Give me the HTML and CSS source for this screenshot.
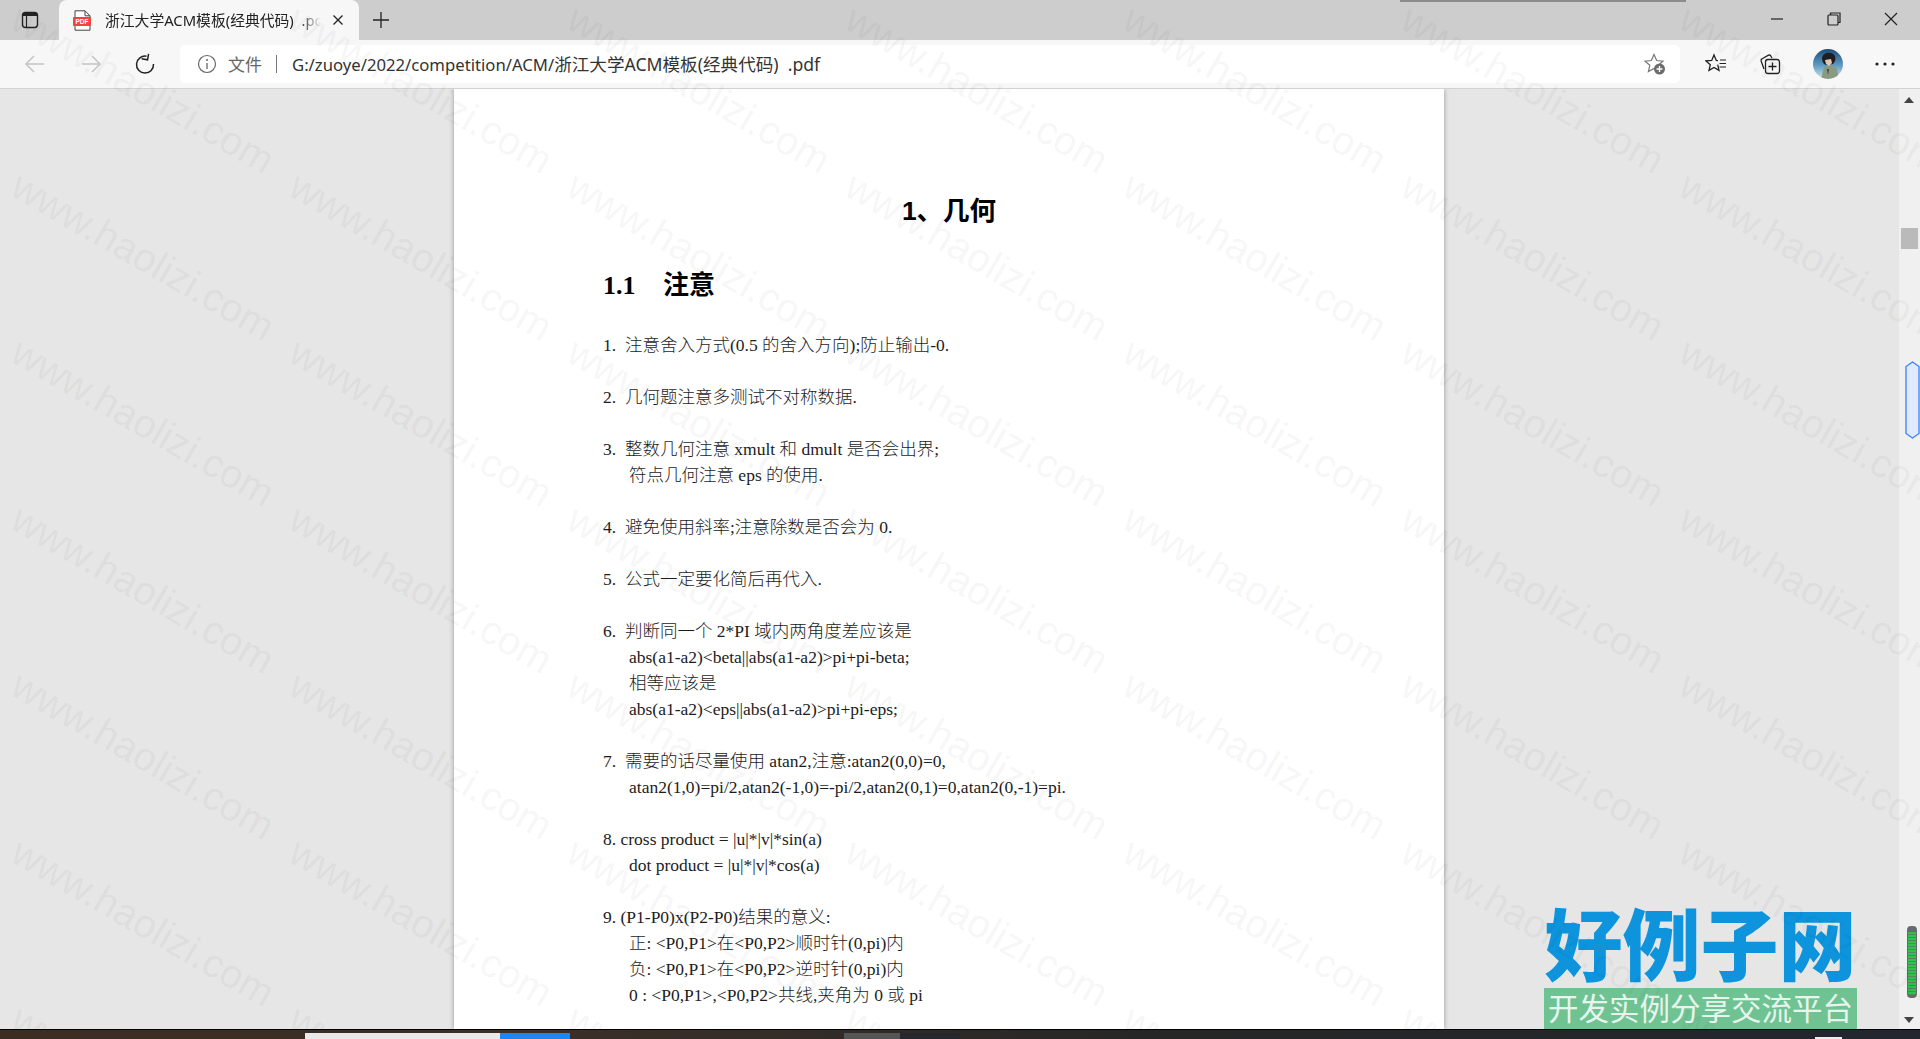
FILE: index.html
```html
<!DOCTYPE html>
<html lang="zh">
<head>
    <meta charset="UTF-8">
    <title>浙江大学ACM模板(经典代码) .pdf</title>
    <link rel="stylesheet" href="styles.css">
</head>
<body>
<div class="tabbar">
    <svg class="tab_actions" width="18" height="18" viewBox="0 0 18 18"><rect x="1.5" y="1.5" width="15" height="15" rx="3" fill="none" stroke="#222" stroke-width="1.4"/><path d="M2 2h14v3H2z" fill="#222"/><path d="M5.5 5v11" stroke="#222" stroke-width="1.2"/></svg>
    <div class="tab">
        <svg class="tab_icon" width="20" height="21" viewBox="0 0 20 21"><path d="M3 .8h10l5 5v14.400H3z" fill="#fff" stroke="#444" stroke-width="1"/><path d="M13 .8v5h5" fill="none" stroke="#444"/><rect x="1" y="7" width="18" height="9" rx="1" fill="#ee4444"/><text x="10" y="14.300" text-anchor="middle" class="pdf_txt">PDF</text></svg>
        <span class="tab_title">浙江大学ACM模板(经典代码)&nbsp; .pdf</span>
        <svg class="tab_close" width="12" height="12" viewBox="0 0 12 12"><path d="M1.500 1.500l9 9M10.500 1.500l-9 9" stroke="#222" stroke-width="1.300"/></svg>
    </div>
    <svg class="tab_new" width="18" height="18" viewBox="0 0 18 18"><path d="M9 1v16M1 9h16" stroke="#222" stroke-width="1.300"/></svg>
    <div class="tab_shadow"></div>
    <div class="win_btns">
        <svg width="14" height="14" viewBox="0 0 14 14"><path d="M1 7h12" stroke="#222" stroke-width="1.200"/></svg>
        <svg width="14" height="14" viewBox="0 0 14 14"><rect x="1" y="3" width="10" height="10" rx="1" fill="none" stroke="#222" stroke-width="1.200"/><path d="M3.500 3V1H13v9.500h-2" fill="none" stroke="#222" stroke-width="1.200"/></svg>
        <svg width="14" height="14" viewBox="0 0 14 14"><path d="M1 1l12 12M13 1L1 13" stroke="#222" stroke-width="1.200"/></svg>
    </div>
</div>
<div class="toolbar">
    <svg class="nav_btn back" width="22" height="22" viewBox="0 0 22 22"><path d="M20 11H2M10 3l-8 8 8 8" fill="none" stroke="#c4c4c4" stroke-width="1.500"/></svg>
    <svg class="nav_btn forward" width="22" height="22" viewBox="0 0 22 22"><path d="M2 11h18M12 3l8 8-8 8" fill="none" stroke="#c4c4c4" stroke-width="1.500"/></svg>
    <svg class="nav_btn reload" width="22" height="22" viewBox="0 0 22 22"><path d="M12.500 3.200A8.500 8.500 0 1 0 19.500 11" fill="none" stroke="#222" stroke-width="1.500"/><path d="M14 .5v6H8" fill="none" stroke="#222" stroke-width="1.500" transform="rotate(10 12 4)"/></svg>
    <div class="address">
        <svg class="info_icon" width="20" height="20" viewBox="0 0 20 20"><circle cx="10" cy="10" r="8.500" fill="none" stroke="#666" stroke-width="1.200"/><path d="M10 9v6" stroke="#666" stroke-width="1.300"/><circle cx="10" cy="6" r="1" fill="#666"/></svg>
        <span class="scheme">文件</span>
        <span class="sep"></span>
        <span class="url"><span class="url_path">G:/zuoye/2022/competition/ACM/</span>浙江大学ACM模板(经典代码)&nbsp; .pdf</span>
        <svg class="fav_add" width="24" height="24" viewBox="0 0 24 24"><path d="M11 2.500l2.700 6 6.300.6-4.800 4.200 1.400 6.300L11 16.400l-5.600 3.200 1.400-6.300L2 9.100l6.300-.6z" fill="none" stroke="#777" stroke-width="1.200"/><circle cx="16.500" cy="17" r="5.500" fill="#6b6b6b"/><path d="M16.500 14v6M13.500 17h6" stroke="#fff" stroke-width="1.400"/></svg>
    </div>
    <svg class="tool_btn favs" width="22" height="22" viewBox="0 0 22 22"><path d="M13 7.600L11.300 7.400 9 2 6.700 7.400 1 7.900 5.300 11.700 4 17.400 9 14.400 14 17.400 12.700 11.700" fill="none" stroke="#222" stroke-width="1.300"/><path d="M15 7h6M14.500 10.500h6.500M14.500 14h6.500" stroke="#222" stroke-width="1.200"/></svg>
    <svg class="tool_btn colls" width="22" height="22" viewBox="0 0 22 22"><path d="M5 16L2.200 8.200a2 2 0 0 1 1-2.500L9.500 2.200a2 2 0 0 1 2.500 1L13 5" fill="none" stroke="#222" stroke-width="1.300"/><rect x="6.500" y="6.500" width="14" height="14" rx="2.500" fill="none" stroke="#222" stroke-width="1.300"/><path d="M13.500 9.500v8M9.500 13.500h8" stroke="#222" stroke-width="1.300"/></svg>
    <svg class="avatar" width="30" height="30" viewBox="0 0 30 30">
        <defs>
            <clipPath id="av_clip"><circle cx="15" cy="15" r="15"/></clipPath>
            <linearGradient id="av_sky" x1="0" y1="0" x2="0" y2="1"><stop offset="0" stop-color="#1c4a7a"/><stop offset=".55" stop-color="#5f9cc4"/><stop offset="1" stop-color="#d5e6ea"/></linearGradient>
        </defs>
        <g clip-path="url(#av_clip)">
            <rect width="30" height="30" fill="url(#av_sky)"/>
            <path d="M8 30l3-12 8-2 5 4 2 10z" fill="#8a9a82"/>
            <path d="M9 9c1-6 10-7 13-2 1 3 0 6-2 8l-7 1c-3-1-4-4-4-7z" fill="#1c1e22"/>
            <path d="M12 11l6-1 1 4-3 3-3-2z" fill="#e2c8b0"/>
            <path d="M14 20l1 6 1-6z" fill="#3a4232"/>
        </g>
    </svg>
    <svg class="tool_btn more" width="22" height="6" viewBox="0 0 22 6"><circle cx="3" cy="3" r="1.600" fill="#222"/><circle cx="11" cy="3" r="1.600" fill="#222"/><circle cx="19" cy="3" r="1.600" fill="#222"/></svg>
</div>
<div class="main">
    <div class="viewer">
        <div class="page">
            <h1 class="title">1、几何</h1>
            <h2 class="sub"><span class="sub_no">1.1</span>注意</h2>
            <p><span class="no">1.</span>注意舍入方式(0.5 的舍入方向);防止输出-0.</p>
            <p><span class="no">2.</span>几何题注意多测试不对称数据.</p>
            <p><span class="no">3.</span>整数几何注意 xmult 和 dmult 是否会出界;<br><span class="indent">符点几何注意 eps 的使用.</span></p>
            <p><span class="no">4.</span>避免使用斜率;注意除数是否会为 0.</p>
            <p><span class="no">5.</span>公式一定要化简后再代入.</p>
            <p><span class="no">6.</span>判断同一个 2*PI 域内两角度差应该是<br><span class="indent">abs(a1-a2)&lt;beta||abs(a1-a2)&gt;pi+pi-beta;</span><br><span class="indent">相等应该是</span><br><span class="indent">abs(a1-a2)&lt;eps||abs(a1-a2)&gt;pi+pi-eps;</span></p>
            <p><span class="no">7.</span>需要的话尽量使用 atan2,注意:atan2(0,0)=0,<br><span class="indent">atan2(1,0)=pi/2,atan2(-1,0)=-pi/2,atan2(0,1)=0,atan2(0,-1)=pi.</span></p>
            <p>8. cross product = |u|*|v|*sin(a)<br><span class="indent">dot product = |u|*|v|*cos(a)</span></p>
            <p>9. (P1-P0)x(P2-P0)结果的意义:<br><span class="indent">正: &lt;P0,P1&gt;在&lt;P0,P2&gt;顺时针(0,pi)内</span><br><span class="indent">负: &lt;P0,P1&gt;在&lt;P0,P2&gt;逆时针(0,pi)内</span><br><span class="indent">0 : &lt;P0,P1&gt;,&lt;P0,P2&gt;共线,夹角为 0 或 pi</span></p>
        </div>
    </div>
    <div class="scroll">
        <span class="arrow_up"></span>
        <span class="thumb"></span>
        <svg class="marker" width="15" height="78" viewBox="0 0 15 78"><path d="M7.500 1L14 5.500v67L7.500 77 1 72.500v-67z" fill="#e0eafc" stroke="#3b82f6" stroke-width="1.300"/></svg>
        <span class="meter"></span>
        <span class="arrow_down"></span>
    </div>
</div>
<div class="taskbar">
    <span class="task_white"></span>
    <span class="task_blue"></span>
    <span class="task_gray"></span>
    <span class="task_dark"></span>
    <span class="task_tray"></span>
</div>
<div class="logo">
    <div class="logo_name">好例子网</div>
    <div class="logo_band">开发实例分享交流平台</div>
</div>
<div class="marks">
    <span>www.haolizi.com</span><span>www.haolizi.com</span><span>www.haolizi.com</span><span>www.haolizi.com</span><span>www.haolizi.com</span><span>www.haolizi.com</span><span>www.haolizi.com</span>
    <span>www.haolizi.com</span><span>www.haolizi.com</span><span>www.haolizi.com</span><span>www.haolizi.com</span><span>www.haolizi.com</span><span>www.haolizi.com</span><span>www.haolizi.com</span>
    <span>www.haolizi.com</span><span>www.haolizi.com</span><span>www.haolizi.com</span><span>www.haolizi.com</span><span>www.haolizi.com</span><span>www.haolizi.com</span><span>www.haolizi.com</span>
    <span>www.haolizi.com</span><span>www.haolizi.com</span><span>www.haolizi.com</span><span>www.haolizi.com</span><span>www.haolizi.com</span><span>www.haolizi.com</span><span>www.haolizi.com</span>
    <span>www.haolizi.com</span><span>www.haolizi.com</span><span>www.haolizi.com</span><span>www.haolizi.com</span><span>www.haolizi.com</span><span>www.haolizi.com</span><span>www.haolizi.com</span>
    <span>www.haolizi.com</span><span>www.haolizi.com</span><span>www.haolizi.com</span><span>www.haolizi.com</span><span>www.haolizi.com</span><span>www.haolizi.com</span><span>www.haolizi.com</span>
    <span>www.haolizi.com</span><span>www.haolizi.com</span><span>www.haolizi.com</span><span>www.haolizi.com</span><span>www.haolizi.com</span><span>www.haolizi.com</span><span>www.haolizi.com</span>
</div>
</body>
</html>
```
FILE: styles.css
```css
html,body{
    margin: 0;
    height: 1039px;
    overflow: hidden;
}
body{
    position: relative;
    display: flex;
    flex-direction: column;
    font-family: "Noto Sans", "Noto Sans CJK SC", sans-serif;
    color: #222;
}
svg{
    flex: none;
    display: block;
}

/* tab strip */
.tabbar{
    position: relative;
    height: 40px;
    flex: none;
    display: flex;
    align-items: center;
    background-color: #cdcdcd;
}
.tab_actions{
    margin-left: 21px;
}
.tab{
    width: 300px;
    height: 40px;
    margin-left: 20px;
    display: flex;
    align-items: center;
    background-color: #f7f7f7;
    border-radius: 8px 8px 0 0;
}
.tab_icon{
    margin-left: 13px;
}
.pdf_txt{
    font-family: "Liberation Sans", sans-serif;
    font-size: 6.500px;
    font-weight: bold;
    fill: #fff;
}
.tab_title{
    width: 216px;
    margin-left: 13px;
    padding-bottom: 2px;
    font-size: 14.800px;
    white-space: nowrap;
    overflow: hidden;
    -webkit-mask-image: linear-gradient(to right, #000 90%, transparent);
    mask-image: linear-gradient(to right, #000 90%, transparent);
}
.tab_close{
    margin-left: 11px;
}
.tab_new{
    margin-left: 13px;
}
.tab_shadow{
    position: absolute;
    top: 0;
    left: 1400px;
    width: 286px;
    height: 2px;
    background-color: #8c8c8c;
}
.win_btns{
    margin-left: auto;
    width: 128px;
    margin-right: 22px;
    margin-top: -3px;
    display: flex;
    justify-content: space-between;
}

/* toolbar */
.toolbar{
    height: 48px;
    flex: none;
    display: flex;
    align-items: center;
    background-color: #f7f7f7;
    border-bottom: 1px solid #d2d2d2;
    box-sizing: content-box;
}
.nav_btn{
    margin-left: 24px;
}
.back{
    margin-left: 24px;
}
.forward{
    margin-left: 34px;
}
.reload{
    margin-left: 32px;
}
.address{
    width: 1500px;
    height: 38px;
    margin-left: 24px;
    display: flex;
    align-items: center;
    background-color: #fff;
    border-radius: 6px;
    font-size: 17px;
}
.info_icon{
    margin-left: 17px;
}
.scheme{
    margin-left: 11px;
    padding-bottom: 2px;
    color: #666;
}
.sep{
    width: 1px;
    height: 18px;
    margin-left: 14px;
    background-color: #777;
}
.url{
    margin-left: 15px;
    padding-bottom: 2px;
    font-size: 17.600px;
    white-space: nowrap;
    color: #333;
}
.url_path{
    font-size: 16.700px;
}
.fav_add{
    margin-left: auto;
    margin-right: 13px;
}
.tool_btn{
    margin-left: 24px;
}
.favs{
    margin-left: 25px;
}
.colls{
    margin-left: 32px;
}
.avatar{
    margin-left: 32px;
}
.more{
    margin-left: 31px;
}

/* pdf area */
.main{
    flex: 1;
    min-height: 0;
    display: flex;
}
.viewer{
    flex: 1;
    overflow: hidden;
    background-color: #e6e6e6;
}
.page{
    width: 990px;
    height: 100%;
    margin-left: 454px;
    box-sizing: border-box;
    padding: 103px 0 0 149px;
    background-color: #fff;
    box-shadow: 0 0 5px rgba(0,0,0,.35);
    font-family: "Liberation Serif", "Noto Sans CJK SC", serif;
    font-size: 17.500px;
    font-weight: 300;
    line-height: 26px;
    color: #1c1c1c;
}
.page p{
    margin: 0 0 26px;
    white-space: nowrap;
}
.title{
    margin: 0 0 36px -149px;
    font-family: "Liberation Sans", "Noto Sans CJK SC", sans-serif;
    font-size: 26.500px;
    font-weight: bold;
    line-height: 38px;
    text-align: center;
    color: #000;
}
.sub{
    margin: 0 0 26px;
    font-size: 26px;
    font-weight: bold;
    line-height: 40px;
    color: #000;
}
.sub_no{
    display: inline-block;
    width: 60px;
}
.no{
    display: inline-block;
    width: 22px;
}
.indent{
    margin-left: 26px;
}

/* scrollbar with its markers */
.scroll{
    position: relative;
    width: 21px;
    flex: none;
    background-color: #f0f0f0;
}
.arrow_up,.arrow_down{
    position: absolute;
    left: 5px;
    width: 0;
    height: 0;
    border-left: 5px solid transparent;
    border-right: 5px solid transparent;
}
.arrow_up{
    top: 8px;
    border-bottom: 6px solid #444;
}
.arrow_down{
    bottom: 6px;
    border-top: 6px solid #444;
}
.thumb{
    position: absolute;
    top: 139px;
    left: 2px;
    width: 17px;
    height: 21px;
    background-color: #bababa;
}
.marker{
    position: absolute;
    top: 272px;
    left: 6px;
}
.meter{
    position: absolute;
    top: 837px;
    left: 8px;
    width: 10px;
    height: 72px;
    box-sizing: border-box;
    border: 2px solid #6a6a6a;
    border-width: 6px 1px 3px;
    border-radius: 4px;
    background: repeating-linear-gradient(to bottom, #2fc24e 0 2px, #4d8a5c 2px 3px);
}

/* taskbar, clipped by the bottom of the screenshot */
.taskbar{
    height: 10px;
    flex: none;
    box-sizing: border-box;
    padding: 3px 0 0 305px;
    display: flex;
    background: linear-gradient(to right, #3c2d22, #3a2f28 30%, #262626 60%, #23262f);
    border-top: 1px solid #000;
}
.task_white{
    width: 195px;
    background-color: #e9e9e9;
}
.task_blue{
    width: 70px;
    background-color: #1e86f0;
}
.task_gray{
    width: 56px;
    margin-left: 274px;
    background-color: #555;
}
.task_dark{
    width: 60px;
    background-color: #26272c;
}
.task_tray{
    width: 27px;
    height: 2px;
    margin-top: 4px;
    margin-left: 855px;
    background-color: #eee;
}

/* site logo over the picture */
.logo{
    position: absolute;
    right: 63px;
    bottom: 10px;
    width: 313px;
}
.logo_name{
    height: 86px;
    font-family: "Noto Sans CJK SC", sans-serif;
    font-size: 78px;
    font-weight: 900;
    line-height: 78px;
    text-align: center;
    white-space: nowrap;
    color: #0d94dc;
}
.logo_band{
    height: 41px;
    background-color: #6fc393;
    font-family: "Noto Sans CJK SC", sans-serif;
    font-size: 30.500px;
    line-height: 38px;
    text-align: center;
    white-space: nowrap;
    color: #e8f5ee;
}

/* repeated watermark over the whole window */
.marks{
    position: absolute;
    top: 0;
    left: 0;
    right: 0;
    bottom: 10px;
    box-sizing: border-box;
    padding: 6px 0 0 4px;
    overflow: hidden;
    pointer-events: none;
    display: grid;
    grid-template-columns: repeat(7, 278px);
    grid-auto-rows: 166.600px;
}
.marks span{
    display: flex;
    align-items: center;
    justify-content: center;
    white-space: nowrap;
    font-family: "Liberation Sans", sans-serif;
    font-size: 40px;
    color: rgba(0,0,0,.055);
    transform: rotate(30deg);
}
```
